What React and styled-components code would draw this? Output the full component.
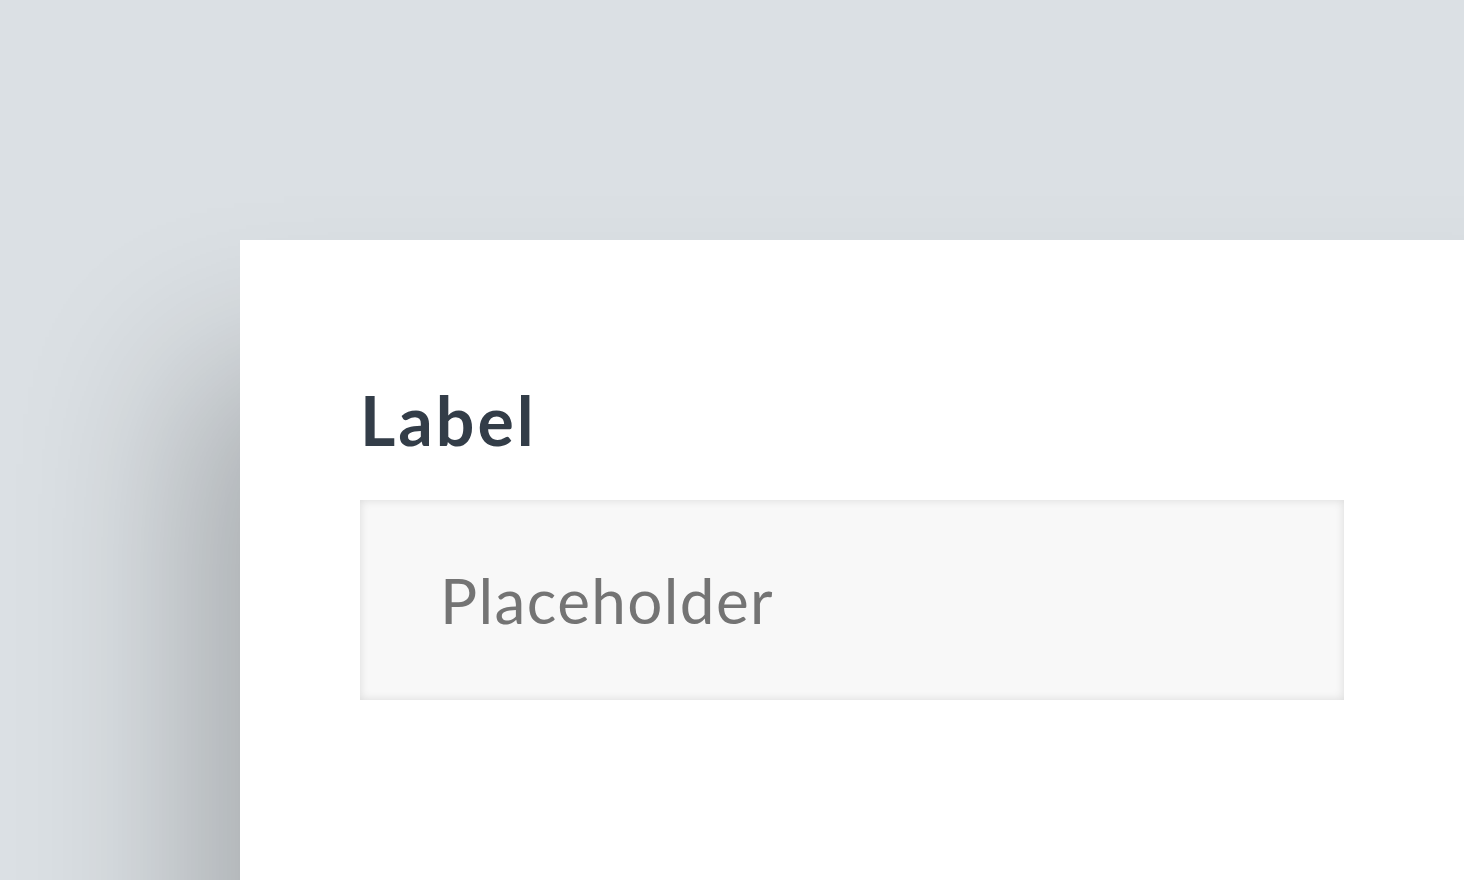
import React from "react";
import styled, { createGlobalStyle } from "styled-components";

const GlobalStyle = createGlobalStyle`
  html, body {
    margin: 0;
    padding: 0;
    height: 100%;
    overflow: hidden;
    background: #dbe0e4;
    font-family: Lato, "Open Sans", sans-serif;
  }
`;

const Page = styled.div`
  height: 880px;
  padding: 240px 0 0 240px;
  box-sizing: border-box;
`;

const Card = styled.div`
  width: 1400px;
  height: 800px;
  background: #ffffff;
  box-shadow: -50px 130px 160px rgba(0, 0, 0, 0.24);
  padding: 140px 0 0 120px;
  box-sizing: border-box;
`;

const Field = styled.div`
  display: flex;
  flex-flow: column nowrap;
  gap: 40px;
  width: 984px;
`;

const Label = styled.label`
  font-size: 68px;
  font-weight: 700;
  letter-spacing: 3px;
  color: #333d48;
  line-height: 80px;
`;

const Input = styled.input`
  height: 200px;
  box-sizing: border-box;
  border: none;
  outline: none;
  background: #f8f8f8;
  box-shadow: inset 0 0 10px rgba(0, 0, 0, 0.12);
  padding: 0 0 0 80px;
  font-family: inherit;
  font-size: 62px;
  letter-spacing: 1.4px;
  color: #333;
  &::placeholder {
    color: #747474;
  }
`;

const App = () => {
  return (
    <>
      <GlobalStyle />
      <Page>
        <Card>
          <Field>
            <Label>Label</Label>
            <Input placeholder="Placeholder" />
          </Field>
        </Card>
      </Page>
    </>
  );
};

export default App;
